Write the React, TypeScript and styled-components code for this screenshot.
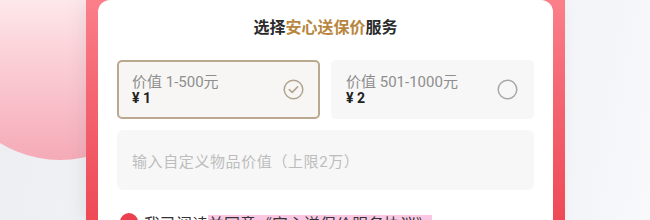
import React from "react";
import styled, { createGlobalStyle } from "styled-components";

const Global = createGlobalStyle`
  html, body { margin: 0; padding: 0; }
  body {
    background: #f3f4f7;
    font-family: Roboto, "Noto Sans CJK SC", sans-serif;
    overflow: hidden;
  }
`;

const Scene = styled.div`
  position: relative;
  width: 650px;
  height: 220px;
  overflow: hidden;
  background: linear-gradient(100deg, #eceef2 0%, #f3f4f7 40%, #f4f5f8 90%, #f8f9fb 100%);
`;

const Blob = styled.div`
  position: absolute;
  left: -54px;
  top: -68px;
  width: 228px;
  height: 228px;
  border-radius: 50%;
  background: linear-gradient(180deg, #fef1f2 20%, #fbd0d7 55%, #f5aab7 100%);
`;

const Panel = styled.div`
  position: relative;
  margin-left: 86px;
  width: 479px;
  height: 220px;
  box-sizing: border-box;
  padding: 0 12px 0 12px;
  background: linear-gradient(180deg, #fb7f89 0%, #f46471 45%, #ee4a56 100%);
  box-shadow: -4px 0 14px rgba(120, 120, 140, 0.12);
`;

const Card = styled.div`
  height: 100%;
  box-sizing: border-box;
  background: #ffffff;
  border-radius: 12px 12px 0 0;
  padding: 16px 19px 0 19px;
  overflow: hidden;
`;

const Title = styled.div`
  text-align: center;
  font-size: 16px;
  line-height: 24px;
  font-weight: 700;
  color: #2b2b2b;
`;

const Gold = styled.span`
  color: #b8863e;
`;

const Options = styled.div`
  margin-top: 20px;
  display: grid;
  grid-template-columns: 1fr 1fr;
  gap: 11px;
`;

const Option = styled.div<{ $selected?: boolean }>`
  height: 59px;
  box-sizing: border-box;
  border-radius: 5px;
  background: ${(p) => (p.$selected ? "#f7f6f4" : "#f7f7f7")};
  border: 2px solid ${(p) => (p.$selected ? "#bba98f" : "transparent")};
  display: flex;
  align-items: center;
  justify-content: space-between;
  padding: 0 14px 0 13px;
`;

const OptionText = styled.div`
  display: flex;
  flex-direction: column;
`;

const Label = styled.span`
  font-size: 15px;
  line-height: 17px;
  color: #8e8e8e;
  white-space: nowrap;
`;

const Price = styled.span`
  font-size: 14px;
  line-height: 15px;
  font-weight: 700;
  color: #222;
  white-space: nowrap;
`;

const InputBox = styled.div`
  margin-top: 11px;
  height: 60px;
  box-sizing: border-box;
  border-radius: 6px;
  background: #f7f7f7;
  display: flex;
  align-items: center;
  padding-left: 15px;
  font-size: 15px;
  letter-spacing: 0.6px;
  color: #bdbdbd;
`;

const Agree = styled.div`
  margin-top: 23px;
  display: flex;
  align-items: flex-start;
  gap: 6px;
  margin-left: 3px;
`;

const Dot = styled.span`
  width: 18px;
  height: 18px;
  border-radius: 50%;
  background: #e9424e;
  flex: none;
`;

const AgreeText = styled.span`
  font-size: 16px;
  line-height: 20px;
  color: #333;
  margin-top: 2px;
  white-space: nowrap;
`;

const Link = styled.span`
  background: #f9c7e3;
  color: #333;
`;

const CheckIcon = () => (
  <svg width="21" height="21" viewBox="0 0 21 21">
    <circle cx="10.5" cy="10.5" r="9.3" fill="none" stroke="#b2a48f" strokeWidth="1.5" />
    <path d="M6.3 10.6 L9.2 13.4 L14.6 7.9" fill="none" stroke="#b2a48f" strokeWidth="1.5" strokeLinecap="round" strokeLinejoin="round" />
  </svg>
);

const RadioIcon = () => (
  <svg width="21" height="21" viewBox="0 0 21 21">
    <circle cx="10.5" cy="10.5" r="9.3" fill="none" stroke="#a8a8a8" strokeWidth="1.5" />
  </svg>
);

export default function App() {
  return (
    <>
      <Global />
      <Scene>
        <Blob />
        <Panel>
          <Card>
            <Title>
              选择<Gold>安心送保价</Gold>服务
            </Title>
            <Options>
              <Option $selected>
                <OptionText>
                  <Label>价值 1-500元</Label>
                  <Price>¥ 1</Price>
                </OptionText>
                <CheckIcon />
              </Option>
              <Option>
                <OptionText>
                  <Label>价值 501-1000元</Label>
                  <Price>¥ 2</Price>
                </OptionText>
                <RadioIcon />
              </Option>
            </Options>
            <InputBox>输入自定义物品价值（上限2万）</InputBox>
            <Agree>
              <Dot />
              <AgreeText>
                我已阅读<Link>并同意《安心送保价服务协议》</Link>
              </AgreeText>
            </Agree>
          </Card>
        </Panel>
      </Scene>
    </>
  );
}
